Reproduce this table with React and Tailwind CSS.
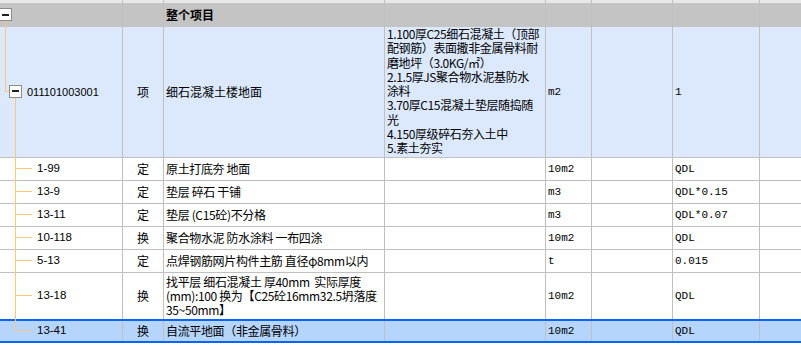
import React from "react";

const COLS = "grid grid-cols-[123px_41px_221px_161px_46px_81px_87px_41px]";
const CJK = "font-['Noto_Sans_CJK_SC',sans-serif]";
const MONO = "font-['Liberation_Mono','Noto_Sans_CJK_SC',monospace] text-[11px]";
const CODE = "font-['Liberation_Sans','Noto_Sans_CJK_SC',sans-serif] text-[11.5px]";
const LINE = "border-[#c0c0c0]";

const kids = [
  { code: "1-99", t: "定", name: ["原土打底夯 地面"], unit: "10m2", qty: "QDL" },
  { code: "13-9", t: "定", name: ["垫层 碎石 干铺"], unit: "m3", qty: "QDL*0.15" },
  { code: "13-11", t: "定", name: ["垫层 (C15砼)不分格"], unit: "m3", qty: "QDL*0.07" },
  { code: "10-118", t: "换", name: ["聚合物水泥 防水涂料 一布四涂"], unit: "10m2", qty: "QDL" },
  { code: "5-13", t: "定", name: ["点焊钢筋网片构件主筋 直径φ8mm以内"], unit: "t", qty: "0.015" },
  {
    code: "13-18",
    t: "换",
    name: ["找平层 细石混凝土 厚40mm  实际厚度", "(mm):100 换为【C25砼16mm32.5坍落度", "35~50mm】"],
    unit: "10m2",
    qty: "QDL",
    h: "h-[46px]",
    noBorder: true,
  },
];

function Cells({ c }) {
  return (
    <>
      <div className={`border-r ${LINE} flex items-center pl-[37px] ${CODE}`}>{c.code}</div>
      <div className={`border-r ${LINE} flex items-center justify-center`}>{c.t}</div>
      <div className={`border-r ${LINE} flex flex-col justify-center pl-[2px] overflow-hidden`}>
        {c.name.map((l, i) => (
          <div key={i} className="leading-[14px] whitespace-pre tracking-[-0.35px]">{l}</div>
        ))}
      </div>
      <div className={`border-r ${LINE}`}></div>
      <div className={`border-r ${LINE} flex items-center pl-[2px] ${MONO}`}>{c.unit}</div>
      <div className={`border-r ${LINE}`}></div>
      <div className={`border-r ${LINE} flex items-center pl-[2px] ${MONO}`}>{c.qty}</div>
      <div></div>
    </>
  );
}

function Blank({ n = 8 }) {
  return (
    <>
      {Array.from({ length: n }).map((_, i) => (
        <div key={i} className={i < n - 1 ? `border-r ${LINE}` : ""}></div>
      ))}
    </>
  );
}

export default function App() {
  const branches = [168.5, 191.5, 214.5, 237.5, 260.5, 295.5, 330.5];
  return (
    <div className={`relative w-[801px] h-[346px] overflow-hidden bg-white text-[12px] text-black ${CJK}`}>
      {/* cut-off previous row */}
      <div className={`${COLS} h-[3px] bg-[#e8e8e8]`}>
        <Blank />
      </div>
      {/* header */}
      <div className={`${COLS} h-[24px] bg-[#c4c4c4]`}>
        <div className={`border-r ${LINE}`}></div>
        <div className={`border-r ${LINE}`}></div>
        <div className={`border-r ${LINE} flex items-center pl-[2px] font-bold`}>整个项目</div>
        <div className={`border-r ${LINE}`}></div>
        <div className={`border-r ${LINE}`}></div>
        <div className={`border-r ${LINE}`}></div>
        <div className={`border-r ${LINE}`}></div>
        <div></div>
      </div>
      {/* main item */}
      <div className={`${COLS} h-[131px] bg-[#dce9fd] border-b ${LINE}`}>
        <div className={`border-r ${LINE} flex items-center pl-[27px] font-['Liberation_Sans',sans-serif] text-[11px]`}>011101003001</div>
        <div className={`border-r ${LINE} flex items-center justify-center`}>项</div>
        <div className={`border-r ${LINE} flex items-center pl-[2px]`}>细石混凝土楼地面</div>
        <div className={`border-r ${LINE} pl-[2px] overflow-hidden`}>
          {[
            "1.100厚C25细石混凝土（顶部",
            "配钢筋）表面撒非金属骨料耐",
            "磨地坪（3.0KG/㎡）",
            "2.1.5厚JS聚合物水泥基防水",
            "涂料",
            "3.70厚C15混凝土垫层随捣随",
            "光",
            "4.150厚级碎石夯入土中",
            "5.素土夯实",
          ].map((l, i) => (
            <div key={i} className="leading-[14.3px] whitespace-nowrap tracking-[-0.4px]">{l}</div>
          ))}
        </div>
        <div className={`border-r ${LINE} flex items-center pl-[2px] ${MONO}`}>m2</div>
        <div className={`border-r ${LINE}`}></div>
        <div className={`border-r ${LINE} flex items-center pl-[2px] ${MONO}`}>1</div>
        <div></div>
      </div>
      {kids.map((c, i) => (
        <div key={i} className={`${COLS} ${c.h || "h-[23px]"} ${c.noBorder ? "" : `border-b ${LINE}`}`}>
          <Cells c={c} />
        </div>
      ))}
      {/* selected row */}
      <div className={`${COLS} h-[24px] bg-[#b5d5fd] border-y-2 border-[#0a64f5]`}>
        <Cells c={{ code: "13-41", t: "换", name: ["自流平地面（非金属骨料）"], unit: "10m2", qty: "QDL" }} />
      </div>

      {/* tree connectors */}
      <svg className="absolute top-0 left-0 pointer-events-none" width="40" height="346">
        <g stroke="#fbc77f" strokeWidth="1" fill="none">
          <line x1="5.5" y1="21" x2="5.5" y2="92" />
          <line x1="5" y1="91.5" x2="10" y2="91.5" />
          <line x1="15.5" y1="98" x2="15.5" y2="331" />
          {branches.map((y) => (
            <line key={y} x1="15" y1={y} x2="32" y2={y} />
          ))}
        </g>
        <rect x="-0.5" y="8.5" width="12" height="12" fill="#fff" stroke="#8c8c8c" />
        <rect x="2" y="14" width="7" height="2" fill="#222" />
        <rect x="9.5" y="85.5" width="12" height="12" fill="#fff" stroke="#8c8c8c" />
        <rect x="12" y="90" width="7" height="2" fill="#222" />
      </svg>
    </div>
  );
}
